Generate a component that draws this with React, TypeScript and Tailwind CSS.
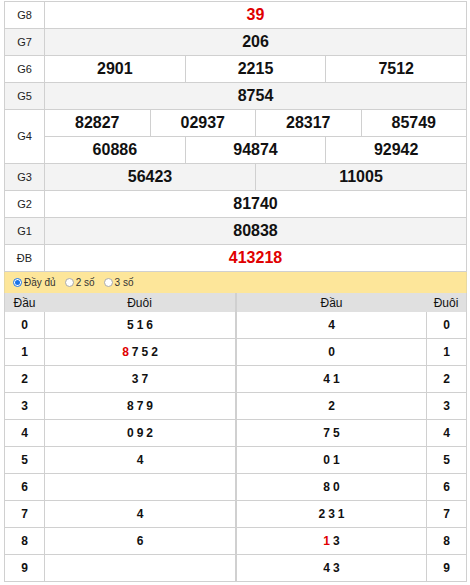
const font = "font-['Liberation_Sans',Arial,sans-serif]";

type Prize = { label: string; rows: string[][]; red?: boolean };

const prizes: Prize[] = [
  { label: 'G8', rows: [['39']], red: true },
  { label: 'G7', rows: [['206']] },
  { label: 'G6', rows: [['2901', '2215', '7512']] },
  { label: 'G5', rows: [['8754']] },
  { label: 'G4', rows: [['82827', '02937', '28317', '85749'], ['60886', '94874', '92942']] },
  { label: 'G3', rows: [['56423', '11005']] },
  { label: 'G2', rows: [['81740']] },
  { label: 'G1', rows: [['80838']] },
  { label: 'ĐB', rows: [['413218']], red: true },
];

// [digit, values, index of red value or -1]
const dauRows: [string, string[], number][] = [
  ['0', ['5', '1', '6'], -1],
  ['1', ['8', '7', '5', '2'], 0],
  ['2', ['3', '7'], -1],
  ['3', ['8', '7', '9'], -1],
  ['4', ['0', '9', '2'], -1],
  ['5', ['4'], -1],
  ['6', [], -1],
  ['7', ['4'], -1],
  ['8', ['6'], -1],
  ['9', [], -1],
];

const duoiRows: [string, string[], number][] = [
  ['0', ['4'], -1],
  ['1', ['0'], -1],
  ['2', ['4', '1'], -1],
  ['3', ['2'], -1],
  ['4', ['7', '5'], -1],
  ['5', ['0', '1'], -1],
  ['6', ['8', '0'], -1],
  ['7', ['2', '3', '1'], -1],
  ['8', ['1', '3'], 0],
  ['9', ['4', '3'], -1],
];

function Values({ vals, red }: { vals: string[]; red: number }) {
  return (
    <span className="flex gap-[3px]">
      {vals.map((v, i) => (
        <span key={i} className={i === red ? 'text-[#e00000]' : ''}>
          {v}
        </span>
      ))}
    </span>
  );
}

function Radio({ label, checked }: { label: string; checked?: boolean }) {
  return (
    <span className="flex items-center gap-[2px]">
      <span
        className={
          'flex h-[9px] w-[9px] items-center justify-center rounded-full border ' +
          (checked ? 'border-[#1a73e8] bg-white' : 'border-[#aaa] bg-white')
        }
      >
        {checked && <span className="h-[5px] w-[5px] rounded-full bg-[#1a73e8]" />}
      </span>
      <span>{label}</span>
    </span>
  );
}

export default function App() {
  return (
    <div className={`${font} w-[470px] h-[585px] bg-white pl-[4px] pt-[1px] text-[#111]`}>
      <div className="w-[463px] border-l border-t border-[#d0d0d0]">
        {prizes.map((p, idx) => (
          <div
            key={p.label}
            className={'flex border-b border-[#d0d0d0] ' + (idx % 2 === 1 ? 'bg-[#f3f3f3]' : 'bg-white')}
          >
            <div className="flex w-[40px] shrink-0 items-center justify-center border-r border-[#d0d0d0] text-[11px] text-[#222]">
              {p.label}
            </div>
            <div className="flex flex-1 flex-col">
              {p.rows.map((row, ri) => {
                const last = ri === p.rows.length - 1;
                return (
                  <div key={ri} className={last ? 'flex h-[26px]' : 'flex h-[27px] border-b border-[#d0d0d0]'}>
                    {row.map((n, ci) => (
                      <div
                        key={ci}
                        className={
                          'flex flex-1 items-center justify-center border-r border-[#d0d0d0] text-[16px] font-bold ' +
                          (p.red ? 'text-[#e00000]' : 'text-[#111]')
                        }
                      >
                        {n}
                      </div>
                    ))}
                  </div>
                );
              })}
            </div>
          </div>
        ))}
      </div>

      <div className="flex h-[21px] w-[463px] items-center gap-[9px] border-x border-[#e8d9a0] bg-[#fde69a] pl-[8px] text-[10px] text-[#333]">
        <Radio label="Đầy đủ" checked />
        <Radio label="2 số" />
        <Radio label="3 số" />
      </div>

      <div className="flex w-[463px]">
        {[dauRows, duoiRows].map((rows, t) => (
          <div key={t} className={'border-x border-[#d0d0d0] ' + (t === 0 ? 'w-[232px]' : 'w-[231px]')}>
            <div className="flex h-[19px] items-center bg-[#e0e0e0] text-[12px] text-[#111]">
              {t === 0 ? (
                <>
                  <div className="w-[39px] text-center">Đầu</div>
                  <div className="flex-1 text-center">Đuôi</div>
                </>
              ) : (
                <>
                  <div className="flex-1 text-center">Đầu</div>
                  <div className="w-[40px] text-center">Đuôi</div>
                </>
              )}
            </div>
            {rows.map(([d, vals, red]) => (
              <div key={d} className="flex h-[27px] border-b border-[#d0d0d0] text-[12px] font-bold">
                {t === 0 ? (
                  <>
                    <div className="flex w-[40px] items-center justify-center border-r border-[#d0d0d0]">{d}</div>
                    <div className="flex flex-1 items-center justify-center">
                      <Values vals={vals} red={red} />
                    </div>
                  </>
                ) : (
                  <>
                    <div className="flex flex-1 items-center justify-center border-r border-[#d0d0d0]">
                      <Values vals={vals} red={red} />
                    </div>
                    <div className="flex w-[39px] items-center justify-center">{d}</div>
                  </>
                )}
              </div>
            ))}
          </div>
        ))}
      </div>
    </div>
  );
}
